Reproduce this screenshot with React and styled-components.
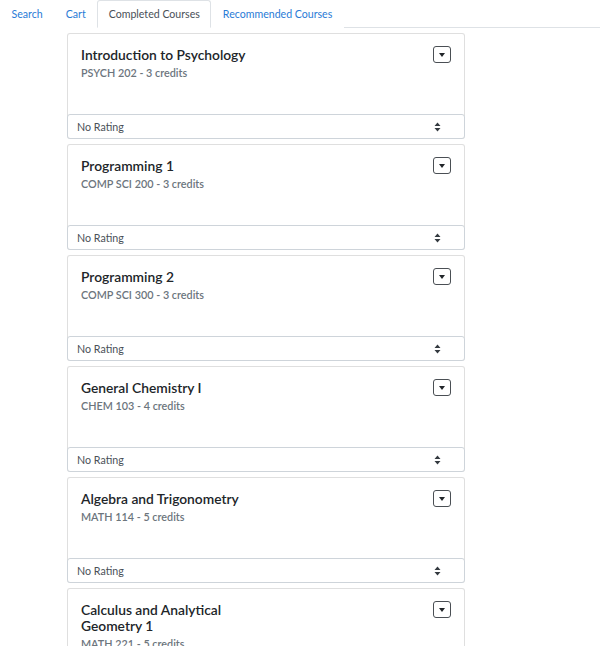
import React from 'react';
import styled, { createGlobalStyle } from 'styled-components';

const GlobalStyle = createGlobalStyle`
  body {
    margin: 0;
    background: #fff;
    font-family: Lato, "Open Sans", sans-serif;
    color: #212529;
  }
`;

const Nav = styled.ul`
  display: flex;
  margin: 0;
  padding: 0;
  list-style: none;
  border-bottom: 1px solid #dee2e6;
  height: 28px;
  box-sizing: border-box;
`;

const Tab = styled.li`
  margin-bottom: -1px;
  padding: 0 10.5px 1px;
  height: 28px;
  display: flex;
  align-items: center;
  font-size: 10.6px;
  color: ${(p) => (p.active ? '#495057' : '#2a7bd6')};
  border: 1px solid ${(p) => (p.active ? '#dee2e6' : 'transparent')};
  border-bottom-color: ${(p) => (p.active ? '#fff' : 'transparent')};
  border-radius: 3px 3px 0 0;
  background: #fff;
  box-sizing: border-box;
  cursor: pointer;
`;

const List = styled.div`
  display: flex;
  flex-direction: column;
  gap: 5px;
  padding: 5px 0 0 67px;
`;

const Card = styled.div`
  width: 396px;
  border: 1px solid rgba(0, 0, 0, 0.125);
  border-radius: 3px;
  background: #fff;
`;

const Body = styled.div`
  display: flex;
  justify-content: space-between;
  align-items: flex-start;
  padding: 12px 13px 0 13px;
  height: 80px;
  box-sizing: border-box;
`;

const Info = styled.div`
  max-width: 185px;
`;

const Title = styled.h5`
  margin: 0 0 3px;
  font-size: 13.8px;
  font-weight: 600;
  line-height: 16px;
  padding-top: 1px;
  color: #212529;
`;

const Subtitle = styled.h6`
  margin: 0;
  font-size: 10.8px;
  font-weight: 600;
  color: #6c757d;
  line-height: 14px;
`;

const ToggleButton = styled.button`
  width: 18px;
  height: 17px;
  padding: 0;
  border: 1px solid #4a4f54;
  border-radius: 3px;
  background: #fff;
  display: flex;
  align-items: center;
  justify-content: center;
  cursor: pointer;
`;

const Select = styled.div`
  display: flex;
  align-items: center;
  justify-content: space-between;
  height: 25px;
  margin: 0 -1px -1px -1px;
  padding: 0 23px 0 9px;
  box-sizing: border-box;
  border: 1px solid #ced4da;
  border-radius: 3px;
  font-size: 10.7px;
  color: #495057;
  background: #fff;
`;

const courses = [
  { name: 'Introduction to Psychology', code: 'PSYCH 202', credits: 3 },
  { name: 'Programming 1', code: 'COMP SCI 200', credits: 3 },
  { name: 'Programming 2', code: 'COMP SCI 300', credits: 3 },
  { name: 'General Chemistry I', code: 'CHEM 103', credits: 4 },
  { name: 'Algebra and Trigonometry', code: 'MATH 114', credits: 5 },
  { name: 'Calculus and Analytical Geometry 1', code: 'MATH 221', credits: 5 },
];

const Caret = () => (
  <svg width="8" height="6" viewBox="0 0 8 6">
    <path d="M1 1h6L4 5z" fill="#212529" />
  </svg>
);

const UpDown = () => (
  <svg width="7" height="10" viewBox="0 0 7 10">
    <path d="M3.5 0.5L6.5 4H0.5z M3.5 9.5L0.5 6h6z" fill="#343a40" />
  </svg>
);

const App = () => (
  <>
    <GlobalStyle />
    <Nav>
      <Tab>Search</Tab>
      <Tab>Cart</Tab>
      <Tab active>Completed Courses</Tab>
      <Tab>Recommended Courses</Tab>
    </Nav>
    <List>
      {courses.map((c) => (
        <Card key={c.code}>
          <Body>
            <Info>
              <Title>{c.name}</Title>
              <Subtitle>{c.code} - {c.credits} credits</Subtitle>
            </Info>
            <ToggleButton>
              <Caret />
            </ToggleButton>
          </Body>
          <Select>
            <span>No Rating</span>
            <UpDown />
          </Select>
        </Card>
      ))}
    </List>
  </>
);

export default App;
